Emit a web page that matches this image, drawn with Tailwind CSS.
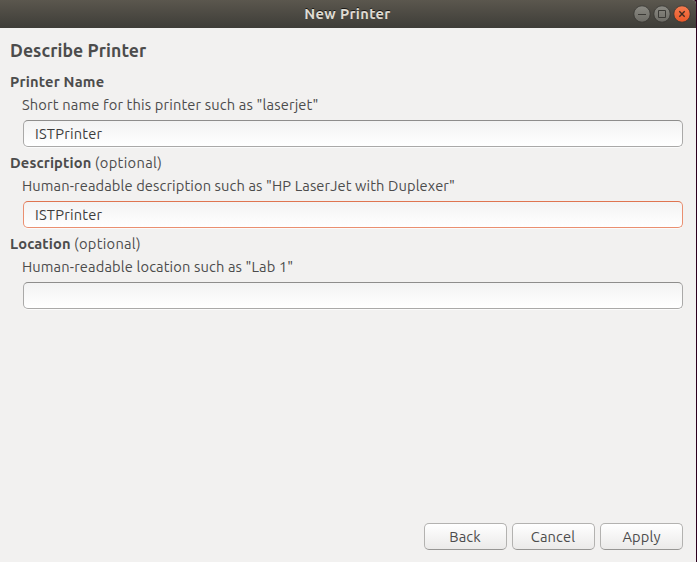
<!DOCTYPE html>
<html lang="en">
<head>
<meta charset="utf-8">
<title>New Printer</title>
<script src="https://cdn.jsdelivr.net/npm/@tailwindcss/browser@4"></script>
</head>
<body class="bg-[#2c001e] font-['Ubuntu','Noto_Sans',sans-serif] text-[14.667px] tracking-[0.13px] text-[#4c4c4c]">
<div class="flex h-[562px] w-[696px] flex-col overflow-hidden rounded-tr-[4px] bg-[#f2f1f0] whitespace-nowrap">
  <header class="grid h-7 shrink-0 grid-cols-[1fr_auto_1fr] items-center bg-linear-to-b from-[#5b574e] to-[#3e3d38] pr-[5px]">
    <span></span>
    <h1 class="relative left-[2px] text-[14.667px] leading-[26px] font-bold tracking-[0.32px] text-[#dfdbd2] [text-shadow:0_-1px_0_#000000b0]">New Printer</h1>
    <div class="flex justify-end gap-[2px]">
      <svg width="18" height="18" viewBox="0 0 18 18" fill="none"><defs><linearGradient id="grey" x2="0" y2="1"><stop stop-color="#8b8a83"/><stop offset="1" stop-color="#6c6b65"/></linearGradient><linearGradient id="orange" x2="0" y2="1"><stop stop-color="#f67c50"/><stop offset="1" stop-color="#ea5828"/></linearGradient></defs><circle cx="9" cy="9" r="8.2" fill="url(#grey)" stroke="#373632" stroke-width=".8"/><path d="M5 9.5h8" stroke="#3b3a36"/></svg>
      <svg width="18" height="18" viewBox="0 0 18 18" fill="none"><circle cx="9" cy="9" r="8.2" fill="url(#grey)" stroke="#373632" stroke-width=".8"/><path d="M5.5 5.5h7v7h-7z" stroke="#3b3a36"/></svg>
      <svg width="18" height="18" viewBox="0 0 18 18" fill="none"><circle cx="9" cy="9" r="8.2" fill="url(#orange)" stroke="#373632" stroke-width=".8"/><path d="M6.3 6.3l5.4 5.4M11.7 6.3l-5.4 5.4" stroke="#402c20" stroke-width="1.4"/></svg>
    </div>
  </header>
  <main class="flex flex-1 flex-col pt-[9px] pr-[13px] pb-3 pl-[10px]">
    <h2 class="h-[34px] text-[17.6px] leading-[27px] font-bold tracking-[0.08px]">Describe Printer</h2>
    <section class="mb-[5px]">
      <p class="h-[23px] leading-[22px] tracking-[0.2px]"><b>Printer Name</b></p>
      <p class="mb-1 h-[22px] pl-3 leading-[22px] tracking-[0.15px]">Short name for this printer such as "laserjet"</p>
      <div class="ml-[13px] h-[27px] rounded-[5px] border border-[#aaa9a8] border-t-[#8e8d8c] bg-linear-to-b from-[#f3f3f3] to-white pl-[11px] leading-[26px] tracking-[0.22px] text-[#3c3c3c] shadow-[0_1px_0_#ffffffb0]">ISTPrinter</div>
    </section>
    <section class="mb-[5px]">
      <p class="h-[23px] leading-[22px]"><b>Description</b> <span class="tracking-[0.33px]">(optional)</span></p>
      <p class="mb-1 h-[22px] pl-3 leading-[22px] tracking-[0.11px]">Human-readable description such as "HP LaserJet with Duplexer"</p>
      <div class="ml-[13px] h-[27px] rounded-[5px] border border-[#ea8f70] border-t-[#df7450] bg-linear-to-b from-[#f3f3f3] to-white pl-[11px] leading-[26px] tracking-[0.22px] text-[#3c3c3c] shadow-[0_1px_0_#ffffffb0]">ISTPrinter</div>
    </section>
    <section>
      <p class="h-[23px] leading-[22px]"><b>Location</b> <span class="tracking-[0.28px]">(optional)</span></p>
      <p class="mb-1 h-[22px] pl-3 leading-[22px]">Human-readable location such as "Lab 1"</p>
      <div class="ml-[13px] h-[27px] rounded-[5px] border border-[#aaa9a8] border-t-[#8e8d8c] bg-linear-to-b from-[#f3f3f3] to-white shadow-[0_1px_0_#ffffffb0]"></div>
    </section>
    <div class="mt-auto flex justify-end gap-[5px]">
      <button class="h-[27px] w-[83px] rounded-[5px] border border-[#b3b2b0] border-b-[#979694] bg-linear-to-b from-white to-[#ebeae9] pr-px leading-[25px]">Back</button>
      <button class="h-[27px] w-[83px] rounded-[5px] border border-[#b3b2b0] border-b-[#979694] bg-linear-to-b from-white to-[#ebeae9] pr-px leading-[25px]">Cancel</button>
      <button class="h-[27px] w-[83px] rounded-[5px] border border-[#b3b2b0] border-b-[#979694] bg-linear-to-b from-white to-[#ebeae9] leading-[25px]">Apply</button>
    </div>
  </main>
</div>
</body>
</html>
